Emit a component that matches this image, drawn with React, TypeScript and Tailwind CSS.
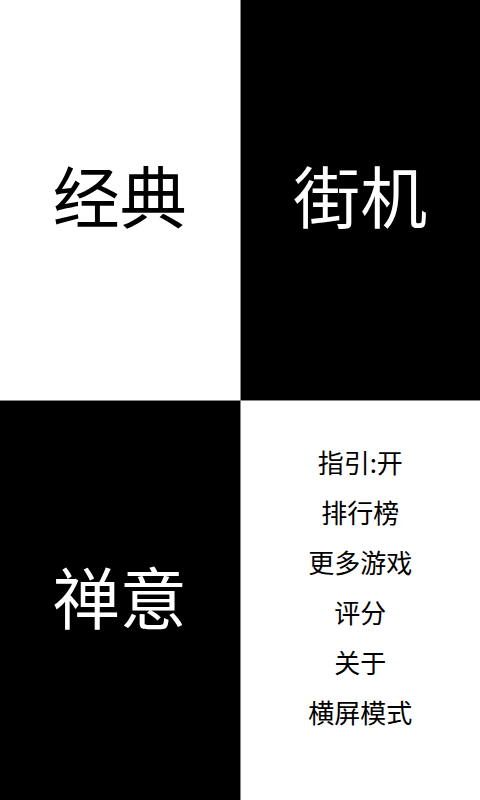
const menuItems = ["指引:开", "排行榜", "更多游戏", "评分", "关于", "横屏模式"];

export default function App() {
  return (
    <div
      className="grid h-[800px] w-[480px] grid-cols-2 grid-rows-2 gap-px bg-[#888888]"
      style={{ fontFamily: '"Noto Sans CJK SC", "Noto Sans", sans-serif' }}
    >
      <div className="flex items-center justify-center bg-white pb-[12px] text-[67px] text-black">经典</div>
      <div className="flex items-center justify-center bg-black pb-[12px] text-[67px] text-white">街机</div>
      <div className="flex items-center justify-center bg-black pb-[10px] text-[67px] text-white">禅意</div>
      <div className="flex flex-col items-center bg-white pt-[36px] text-[26px] leading-[50px] text-black">
        {menuItems.map((item) => (
          <div key={item}>{item}</div>
        ))}
      </div>
    </div>
  );
}
